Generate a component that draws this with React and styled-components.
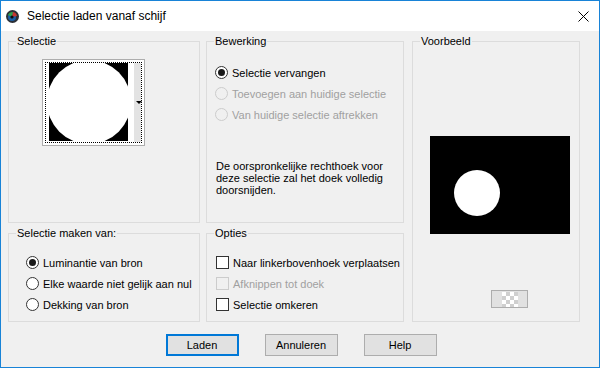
import React from 'react';
import styled, { createGlobalStyle } from 'styled-components';

const GlobalStyle = createGlobalStyle`
  html, body {
    margin: 0;
    padding: 0;
    background: #ffffff;
  }
  body {
    font-family: "Liberation Sans", Arial, sans-serif;
    font-size: 11px;
    color: #000;
  }
`;

const Window = styled.div`
  width: 600px;
  height: 368px;
  box-sizing: border-box;
  border: 1px solid #1883d7;
  display: flex;
  flex-direction: column;
  background: #f0f0f0;
`;

const TitleBar = styled.div`
  height: 30px;
  background: #ffffff;
  display: flex;
  align-items: center;
  padding: 0 10px 0 4px;
  gap: 7px;
`;

const Title = styled.span`
  flex: 1;
  font-size: 12px;
  line-height: 14px;
  margin-top: -1px;
`;

const Body = styled.div`
  flex: 1;
  padding: 10px 0 0 7px;
  display: flex;
  flex-direction: column;
`;

const Grid = styled.div`
  display: grid;
  grid-template-columns: 192px 6px 198px 8px 168px;
  grid-template-rows: 182px 10px 89px;
`;

const Group = styled.div`
  position: relative;
  border: 1px solid #dcdcdc;
  grid-column: ${(p) => p.col};
  grid-row: ${(p) => p.row};
  padding: ${(p) => p.pad || '0'};
  display: flex;
  flex-direction: column;
`;

const Legend = styled.span`
  position: absolute;
  top: -7px;
  left: 7px;
  padding: 0 1px;
  line-height: 13px;
  background: #f0f0f0;
`;

const PreviewBox = styled.div`
  width: 103px;
  height: 87px;
  box-sizing: border-box;
  border: 1px solid #adadad;
  background: #ffffff;
  padding: 2px;
  display: flex;
`;

const FocusRect = styled.div`
  flex: 1;
  border: 1px dotted #000;
  display: flex;
  padding-left: 3px;
`;

const Thumb = styled.svg`
  display: block;
  flex: none;
`;

const Strip = styled.div`
  width: 7px;
  margin-left: 6px;
  background: #e3e3e3;
  display: flex;
  align-items: center;
  justify-content: center;
`;

const Arrow = styled.span`
  width: 0;
  height: 0;
  border-left: 3px solid transparent;
  border-right: 3px solid transparent;
  border-top: 3px solid #000;
  margin-left: 2px;
`;

const Row = styled.label`
  height: 21px;
  display: flex;
  align-items: center;
  gap: 4px;
  color: ${(p) => (p.disabled ? '#a0a0a0' : '#000')};
`;

const Radio = styled.span`
  width: 13px;
  height: 13px;
  box-sizing: border-box;
  border-radius: 50%;
  border: 1px solid ${(p) => (p.disabled ? '#cccccc' : '#333333')};
  background: ${(p) => (p.disabled ? '#f0f0f0' : '#ffffff')};
  display: flex;
  align-items: center;
  justify-content: center;
  &::after {
    content: '';
    width: 7px;
    height: 7px;
    border-radius: 50%;
    background: ${(p) => (p.checked ? '#1a1a1a' : 'transparent')};
  }
`;

const Check = styled.span`
  width: 13px;
  height: 13px;
  box-sizing: border-box;
  border: 1px solid ${(p) => (p.disabled ? '#cccccc' : '#333333')};
  background: ${(p) => (p.disabled ? '#f0f0f0' : '#ffffff')};
`;

const Note = styled.p`
  margin: 35px 0 0 1px;
  line-height: 12px;
`;

const BlackPreview = styled.svg`
  display: block;
  margin: 94px 0 0 17px;
`;

const CheckerButton = styled.div`
  width: 37px;
  height: 18px;
  box-sizing: border-box;
  margin: 56px 0 0 78px;
  border: 1px solid #adadad;
  background: #e1e1e1;
  display: flex;
  align-items: center;
  justify-content: center;
`;

const Checker = styled.div`
  width: 16px;
  height: 15px;
  background-color: #ffffff;
  background-image:
    linear-gradient(45deg, #cfcfcf 25%, transparent 25%, transparent 75%, #cfcfcf 75%),
    linear-gradient(45deg, #cfcfcf 25%, transparent 25%, transparent 75%, #cfcfcf 75%);
  background-size: 8px 8px;
  background-position: 0 0, 4px 4px;
`;

const ButtonRow = styled.div`
  margin: 12px 0 0 -5px;
  display: flex;
  justify-content: center;
  gap: 26px;
`;

const Button = styled.button`
  width: 73px;
  height: 22px;
  box-sizing: border-box;
  font-family: "Liberation Sans", Arial, sans-serif;
  font-size: 11px;
  color: #000;
  background: #e1e1e1;
  border: ${(p) => (p.primary ? '2px solid #0078d7' : '1px solid #adadad')};
  padding: 0;
`;

const radiosBewerking = [
  { label: 'Selectie vervangen', checked: true },
  { label: 'Toevoegen aan huidige selectie', disabled: true },
  { label: 'Van huidige selectie aftrekken', disabled: true },
];

const radiosBron = [
  { label: 'Luminantie van bron', checked: true },
  { label: 'Elke waarde niet gelijk aan nul' },
  { label: 'Dekking van bron' },
];

const opties = [
  { label: 'Naar linkerbovenhoek verplaatsen' },
  { label: 'Afknippen tot doek', disabled: true },
  { label: 'Selectie omkeren' },
];

const AppIcon = () => (
  <svg width="15" height="15" viewBox="0 0 15 15">
    <circle cx="7.5" cy="7.5" r="6.5" fill="#2b2f36" />
    <circle cx="7" cy="8" r="4" fill="#1a5fa8" />
    <path d="M3 6 A5 5 0 0 1 8 3 L7 8 Z" fill="#2fa34a" />
    <path d="M8 3 A5 5 0 0 1 12 7 L7 8 Z" fill="#c8372d" />
    <circle cx="7" cy="8" r="1.6" fill="#0c0c0c" />
  </svg>
);

const CloseIcon = () => (
  <svg width="11" height="11" viewBox="0 0 11 11">
    <path d="M0.5 0.5 L10.5 10.5 M10.5 0.5 L0.5 10.5" stroke="#000" strokeWidth="1" />
  </svg>
);

export default function App() {
  return (
    <>
      <GlobalStyle />
      <Window>
        <TitleBar>
          <AppIcon />
          <Title>Selectie laden vanaf schijf</Title>
          <CloseIcon />
        </TitleBar>
        <Body>
          <Grid>
            <Group col="1" row="1" pad="17px 0 0 33px">
              <Legend>Selectie</Legend>
              <PreviewBox>
                <FocusRect>
                  <Thumb width="79" height="78" viewBox="0 0 79 78">
                    <rect width="79" height="78" fill="#000" />
                    <circle cx="40" cy="39" r="42" fill="#fff" />
                  </Thumb>
                  <Strip>
                    <Arrow />
                  </Strip>
                </FocusRect>
              </PreviewBox>
            </Group>

            <Group col="3" row="1" pad="20px 0 0 8px">
              <Legend>Bewerking</Legend>
              {radiosBewerking.map((r) => (
                <Row key={r.label} disabled={r.disabled}>
                  <Radio checked={r.checked} disabled={r.disabled} />
                  {r.label}
                </Row>
              ))}
              <Note>
                De oorspronkelijke rechthoek voor
                <br />
                deze selectie zal het doek volledig
                <br />
                doorsnijden.
              </Note>
            </Group>

            <Group col="5" row="1 / 4">
              <Legend>Voorbeeld</Legend>
              <BlackPreview width="140" height="98" viewBox="0 0 140 98">
                <rect width="140" height="98" fill="#000" />
                <circle cx="47" cy="57" r="23" fill="#fff" />
              </BlackPreview>
              <CheckerButton>
                <Checker />
              </CheckerButton>
            </Group>

            <Group col="1" row="3" pad="18px 0 0 17px">
              <Legend>Selectie maken van:</Legend>
              {radiosBron.map((r) => (
                <Row key={r.label}>
                  <Radio checked={r.checked} />
                  {r.label}
                </Row>
              ))}
            </Group>

            <Group col="3" row="3" pad="18px 0 0 9px">
              <Legend>Opties</Legend>
              {opties.map((o) => (
                <Row key={o.label} disabled={o.disabled}>
                  <Check disabled={o.disabled} />
                  {o.label}
                </Row>
              ))}
            </Group>
          </Grid>
          <ButtonRow>
            <Button primary>Laden</Button>
            <Button>Annuleren</Button>
            <Button>Help</Button>
          </ButtonRow>
        </Body>
      </Window>
    </>
  );
}
